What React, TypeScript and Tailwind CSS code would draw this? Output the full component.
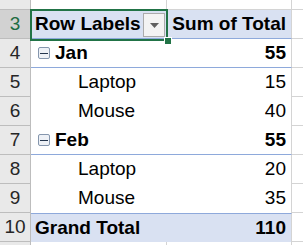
const rows = [
  { n: 4, label: "Jan", value: "55", kind: "group" },
  { n: 5, label: "Laptop", value: "15", kind: "item" },
  { n: 6, label: "Mouse", value: "40", kind: "item" },
  { n: 7, label: "Feb", value: "55", kind: "group" },
  { n: 8, label: "Laptop", value: "20", kind: "item" },
  { n: 9, label: "Mouse", value: "35", kind: "item" },
];

const RowHead = ({ n, sel = false }: { n: number; sel?: boolean }) => (
  <div
    className={`h-[29px] w-[31px] shrink-0 flex items-center justify-center border-r border-b border-[#bdbdbd] ${
      sel ? "bg-[#d2d2d2] text-[#1e6c41]" : "bg-[#e9e9e9] text-[#262626]"
    } text-[19px]`}
  >
    {n}
  </div>
);

const MinusBox = () => (
  <span className="w-[12px] h-[12px] mr-[5px] rounded-[2px] border border-[#8596ad] bg-[#eef1f6] flex items-center justify-center">
    <span className="w-[8px] h-px bg-[#25364d]" />
  </span>
);

export default function App() {
  return (
    <div
      className="relative w-[303px] h-[245px] bg-white overflow-hidden text-black"
      style={{ fontFamily: '"Liberation Sans", Arial, sans-serif' }}
    >
      {/* row 2, cut off at the top */}
      <div className="flex h-[10px]">
        <div className="h-[10px] w-[31px] shrink-0 bg-[#e9e9e9] border-r border-b border-[#bdbdbd]" />
        <div className="w-[136px] border-r border-b border-[#d4d4d4]" />
        <div className="w-[125px] border-r border-b border-[#d4d4d4]" />
        <div className="flex-1 border-b border-[#d4d4d4]" />
      </div>

      {/* header row */}
      <div className="flex h-[29px]">
        <RowHead n={3} sel />
        <div className="w-[136px] flex items-center pl-[4px] bg-[#d9e1f2] border-b border-[#8ea9db] font-bold text-[19px]">
          Row Labels
        </div>
        <div className="w-[125px] flex items-center justify-end pr-[5px] bg-[#d9e1f2] border-r border-b border-[#8ea9db] border-r-[#d4d4d4] font-bold text-[19px]">
          Sum of Total
        </div>
        <div className="flex-1 border-b border-[#d4d4d4]" />
      </div>

      {rows.map((r) => (
        <div key={r.n} className="flex h-[29px]">
          <RowHead n={r.n} />
          <div
            className={`w-[136px] flex items-center text-[19px] ${
              r.kind === "group" ? "pl-[7px] font-bold" : "pl-[47px]"
            } ${r.n === 4 || r.n === 7 ? "border-b border-[#8ea9db]" : ""}`}
          >
            {r.kind === "group" && <MinusBox />}
            {r.label}
          </div>
          <div
            className={`w-[125px] flex items-center justify-end pr-[5px] text-[19px] border-r border-[#d4d4d4] ${
              r.kind === "group" ? "font-bold" : ""
            } ${r.n === 4 || r.n === 7 ? "border-b border-b-[#8ea9db]" : ""}`}
          >
            {r.value}
          </div>
          <div className="flex-1 border-b border-[#d4d4d4]" />
        </div>
      ))}

      {/* grand total */}
      <div className="flex h-[29px]">
        <RowHead n={10} />
        <div className="w-[136px] flex items-center pl-[4px] bg-[#d9e1f2] border-t border-[#8ea9db] font-bold text-[19px]">
          Grand Total
        </div>
        <div className="w-[125px] flex items-center justify-end pr-[5px] bg-[#d9e1f2] border-t border-[#8ea9db] border-r border-r-[#d4d4d4] font-bold text-[19px]">
          110
        </div>
        <div className="flex-1 border-b border-[#d4d4d4]" />
      </div>

      {/* row 11, cut off at the bottom */}
      <div className="flex h-[6px]">
        <div className="h-[6px] w-[31px] shrink-0 bg-[#e9e9e9] border-r border-[#bdbdbd]" />
        <div className="w-[136px] border-r border-[#d4d4d4]" />
        <div className="w-[125px] border-r border-[#d4d4d4]" />
        <div className="flex-1" />
      </div>

      {/* active cell selection A3 */}
      <div className="absolute left-[30px] top-[9px] w-[138px] h-[32px] border-2 border-[#217346] pointer-events-none" />
      <div className="absolute left-[164px] top-[37px] w-[6px] h-[6px] bg-[#217346] border border-white box-content" />

      {/* filter dropdown */}
      <div className="absolute left-[143px] top-[13px] w-[22px] h-[24px] bg-[#f3f3f3] border border-[#ababab] flex items-center justify-center">
        <svg width="9" height="5" viewBox="0 0 9 5">
          <path d="M0 0 H9 L4.5 5 Z" fill="#5f5f5f" />
        </svg>
      </div>
    </div>
  );
}
